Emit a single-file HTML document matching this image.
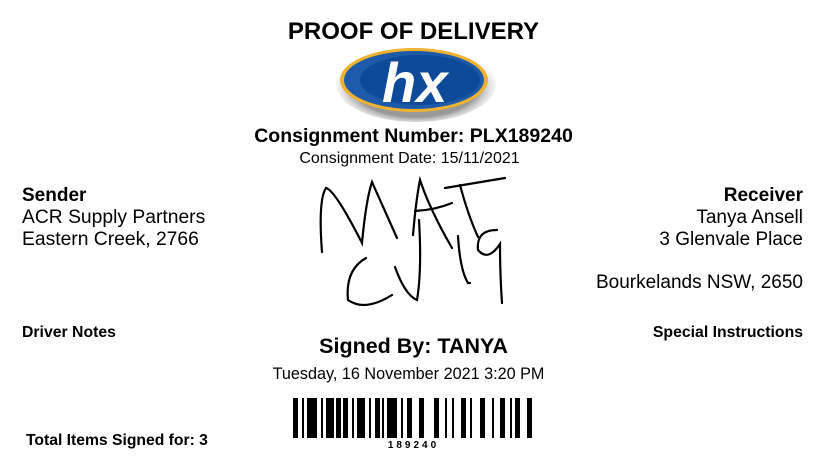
<!DOCTYPE html>
<html><head><style>
body{margin:0;width:827px;height:473px;background:#fff;font-family:"Liberation Sans",sans-serif;color:#000;position:relative;overflow:hidden}
.t{position:absolute;white-space:nowrap}
.c{left:0;width:827px;text-align:center}
.b{font-weight:bold}
</style></head><body>
<div class="t c b" style="top:18px;font-size:24px;">PROOF OF DELIVERY</div>
<svg style="position:absolute;left:330px;top:42px" width="170" height="85" viewBox="0 0 170 85">
<defs><radialGradient id="sh" cx="50%" cy="55%" r="55%"><stop offset="70%" stop-color="#555"/><stop offset="100%" stop-color="#fff" stop-opacity="0"/></radialGradient></defs>
<ellipse cx="86" cy="42" rx="80" ry="38" fill="url(#sh)" opacity="0.6"/>
<ellipse cx="84" cy="38" rx="74" ry="32" fill="#f0b030"/>
<ellipse cx="84" cy="38" rx="70" ry="29" fill="#1d5aa8"/>
<ellipse cx="90" cy="38" rx="60" ry="25" fill="#0d4a9a"/>
<text x="52" y="60" font-family="Liberation Sans" font-weight="bold" font-style="italic" font-size="56" fill="#fff">hx</text>
</svg>
<div class="t c b" style="top:125px;font-size:19.5px;">Consignment Number: PLX189240</div>
<div class="t c" style="top:150px;font-size:16px;left:-4px;">Consignment Date: 15/11/2021</div>
<div class="t b" style="left:22px;top:185px;font-size:19px;">Sender</div>
<div class="t" style="left:22px;top:207px;font-size:19.3px;">ACR Supply Partners</div>
<div class="t" style="left:22px;top:229px;font-size:19.3px;">Eastern Creek, 2766</div>
<div class="t b" style="right:24px;top:185px;font-size:19px;">Receiver</div>
<div class="t" style="right:24px;top:207px;font-size:19px;">Tanya Ansell</div>
<div class="t" style="right:24px;top:229px;font-size:19px;">3 Glenvale Place</div>
<div class="t" style="right:24px;top:272px;font-size:19px;">Bourkelands NSW, 2650</div>
<svg style="position:absolute;left:0;top:0" width="827" height="473" fill="none" stroke="#000" stroke-width="2.2" stroke-linecap="round">
<path d="M322 252 Q318 200 326 188 Q335 190 362 243 Q366 200 372 182 Q380 200 397 238"/>
<path d="M413 235 Q416 200 420 180 Q430 210 452 248"/>
<path d="M415 211 Q435 210 452 203"/>
<path d="M445 188 Q475 183 505 178"/>
<path d="M460 185 Q468 215 478 237"/>
<path d="M366 258 Q345 270 348 300 Q365 312 392 295"/>
<path d="M395 267 Q405 295 417 300 Q422 270 419 220"/>
<path d="M458 236 Q460 270 468 283 L470 283"/>
<path d="M497 230 Q476 230 478 250 Q488 262 500 244 Q500 275 502 303"/>
</svg>
<div class="t b" style="left:22px;top:324px;font-size:15.8px;">Driver Notes</div>
<div class="t b" style="right:24px;top:324px;font-size:15.8px;">Special Instructions</div>
<div class="t c b" style="top:334px;font-size:21.5px;">Signed By: TANYA</div>
<div class="t c" style="top:365px;font-size:16.2px;left:-5px;">Tuesday, 16 November 2021 3:20 PM</div>
<svg style="position:absolute;left:293px;top:398px" width="240" height="40">
<g fill="#000">
<rect x="0" y="0" width="5" height="40"/><rect x="9" y="0" width="2" height="40"/><rect x="14" y="0" width="10" height="40"/><rect x="28" y="0" width="2" height="40"/><rect x="33" y="0" width="8" height="40"/><rect x="43" y="0" width="5" height="40"/><rect x="50" y="0" width="5" height="40"/><rect x="59" y="0" width="2" height="40"/><rect x="64" y="0" width="8" height="40"/><rect x="76" y="0" width="2" height="40"/><rect x="82" y="0" width="5" height="40"/><rect x="89" y="0" width="2" height="40"/><rect x="94" y="0" width="10" height="40"/><rect x="108" y="0" width="2" height="40"/><rect x="114" y="0" width="5" height="40"/><rect x="126" y="0" width="5" height="40"/><rect x="141" y="0" width="5" height="40"/><rect x="152" y="0" width="2" height="40"/><rect x="159" y="0" width="2" height="40"/><rect x="168" y="0" width="5" height="40"/><rect x="177" y="0" width="2" height="40"/><rect x="187" y="0" width="5" height="40"/><rect x="199" y="0" width="2" height="40"/><rect x="207" y="0" width="5" height="40"/><rect x="217" y="0" width="2" height="40"/><rect x="222" y="0" width="5" height="40"/><rect x="234" y="0" width="5" height="40"/>
</g></svg>
<div class="t c b" style="top:440px;font-size:10px;letter-spacing:3px;">189240</div>
<div class="t b" style="left:26px;top:432px;font-size:15.7px;">Total Items Signed for: 3</div>
</body></html>
